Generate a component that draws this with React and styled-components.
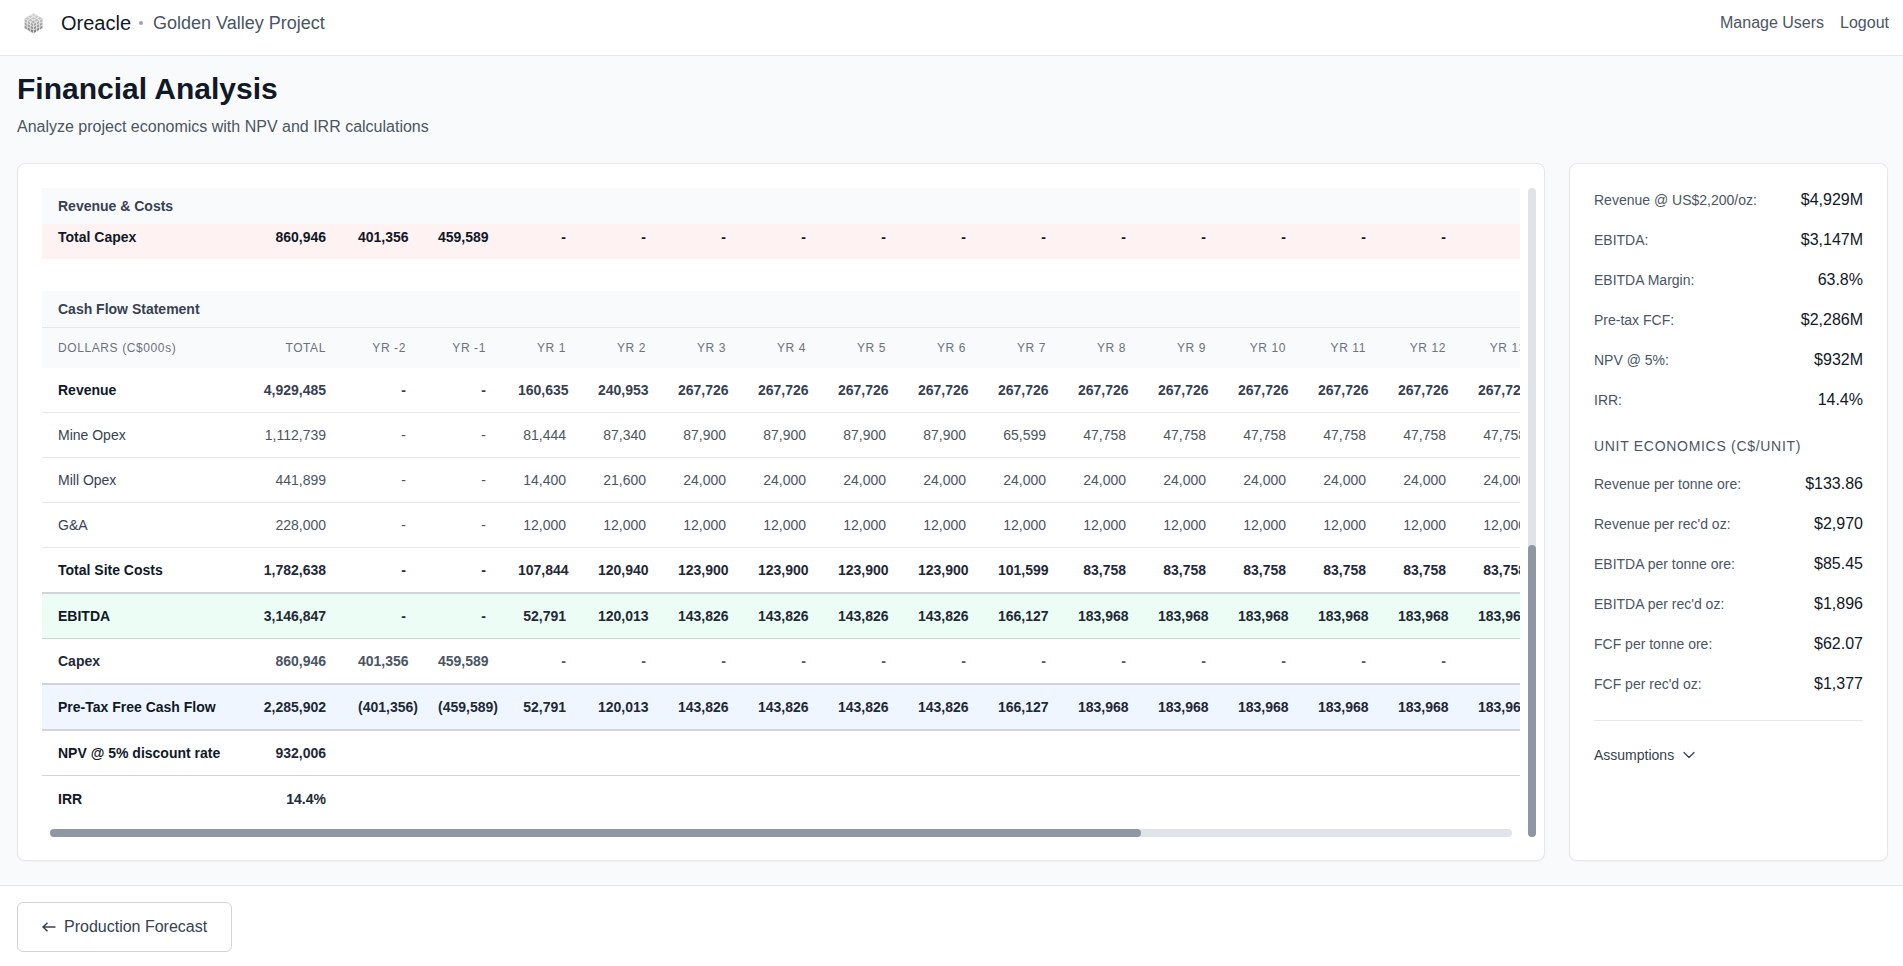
import React from 'react';
import styled, { createGlobalStyle } from 'styled-components';
import { ChevronDown } from 'lucide-react';

const Global = createGlobalStyle`
  * { box-sizing: border-box; }
  html, body { margin: 0; padding: 0; height: 100%; }
  body { font-family: "Liberation Sans", Arial, sans-serif; background: #f9fafb; color: #111827; overflow: hidden; }
`;

const Page = styled.div`
  height: 966px;
  display: flex;
  flex-direction: column;
`;

const Header = styled.header`
  height: 56px;
  flex: none;
  background: #fff;
  border-bottom: 1px solid #e5e7eb;
  display: flex;
  align-items: flex-start;
  justify-content: space-between;
  padding: 12px 14px 0 23px;
`;

const Brand = styled.div`
  display: flex;
  align-items: center;
  height: 22px;
`;

const Logo = styled.svg`
  width: 21px;
  height: 21px;
  margin-right: 17px;
  flex: none;
`;

const BrandName = styled.span`
  font-size: 20px;
  color: #111827;
`;

const BrandDot = styled.span`
  width: 4px;
  height: 4px;
  border-radius: 50%;
  background: #9ca3af;
  margin: 0 10px 0 8px;
`;

const ProjectName = styled.span`
  font-size: 18px;
  color: #4b5563;
`;

const Nav = styled.nav`
  display: flex;
  gap: 16px;
  height: 22px;
  align-items: center;
`;

const NavLink = styled.a`
  font-size: 16px;
  color: #4b5563;
`;

const Main = styled.main`
  flex: 1;
  min-height: 0;
  padding: 15px 15px 25px 17px;
  display: flex;
  flex-direction: column;
`;

const Title = styled.h1`
  margin: 0;
  font-size: 30px;
  line-height: 36px;
  font-weight: 700;
  color: #111827;
`;

const Subtitle = styled.p`
  margin: 8px 0 0;
  font-size: 16px;
  line-height: 24px;
  color: #4b5563;
`;

const Columns = styled.div`
  margin-top: 24px;
  flex: 1;
  min-height: 0;
  display: grid;
  grid-template-columns: 1fr 319px;
  gap: 24px;
`;

const Card = styled.section`
  background: #fff;
  border: 1px solid #e5e7eb;
  border-radius: 8px;
  box-shadow: 0 1px 2px rgba(0, 0, 0, 0.04);
  min-width: 0;
`;

const TableCard = styled(Card)`
  padding: 24px 8px 23px 24px;
  display: grid;
  grid-template-columns: minmax(0, 1fr) 8px;
  grid-template-rows: minmax(0, 1fr) 8px;
  column-gap: 8px;
  row-gap: 8px;
`;

const Viewport = styled.div`
  overflow: hidden;
  min-width: 0;
`;

const SectionTitle = styled.div`
  width: 1500px;
  height: ${p => (p.$ruled ? 37 : 36)}px;
  padding-left: 16px;
  display: flex;
  align-items: center;
  font-size: 14px;
  font-weight: 700;
  color: #374151;
  background: #f9fafb;
  border-bottom: ${p => (p.$ruled ? '1px solid #e5e7eb' : '0')};
`;

const Row = styled.div`
  width: 1500px;
  display: grid;
  grid-template-columns: 200px 100px repeat(15, 80px);
  align-items: center;
  font-size: 14px;
  height: ${p => p.$height}px;
  background: ${p => p.$bg || '#fff'};
  border-top: ${p => p.$top || '0'};
  border-bottom: ${p => p.$bottom || '0'};
`;

const ClippedRow = styled(Row)`
  margin-bottom: 32px;
  padding-bottom: 9px;
`;

const HeadRow = styled(Row)`
  font-size: 12px;
  letter-spacing: 0.05em;
  color: #6b7280;
  text-transform: uppercase;
  background: #f9fafb;
`;

const HeadLabel = styled.div`
  padding-left: 16px;
  white-space: nowrap;
`;

const LowerCase = styled.span`
  text-transform: none;
`;

const RowLabel = styled.div`
  padding-left: 16px;
  white-space: nowrap;
  font-weight: ${p => (p.$bold ? 700 : 400)};
  color: ${p => (p.$bold ? p.$color || '#111827' : '#374151')};
`;

const Cell = styled.div`
  padding: 0 16px;
  text-align: right;
  white-space: nowrap;
  font-weight: ${p => (p.$bold ? 700 : 400)};
  color: ${p => p.$color || (p.$bold ? '#1f2937' : '#4b5563')};
`;

const HeadCell = styled.div`
  padding: 0 16px;
  text-align: right;
  white-space: nowrap;
`;

const VTrack = styled.div`
  grid-row: 1 / span 2;
  grid-column: 2;
  background: #e0e3e7;
  border-radius: 4px;
  display: flex;
  flex-direction: column;
  justify-content: flex-end;
`;

const VThumb = styled.div`
  height: 292px;
  background: #8e97a3;
  border-radius: 4px;
`;

const HTrack = styled.div`
  grid-row: 2;
  grid-column: 1;
  margin: 0 8px;
  background: #e0e3e7;
  border-radius: 4px;
`;

const HThumb = styled.div`
  width: 1091px;
  height: 8px;
  background: #8e97a3;
  border-radius: 4px;
`;

const SidePanel = styled(Card)`
  padding: 16px 24px 0 24px;
`;

const Metric = styled.div`
  height: 40px;
  display: flex;
  align-items: center;
  justify-content: space-between;
`;

const MetricLabel = styled.span`
  font-size: 14px;
  color: #4b5563;
`;

const MetricValue = styled.span`
  font-size: 16px;
  color: #111827;
`;

const SideHeading = styled.div`
  margin: 16px 0 8px;
  font-size: 14px;
  line-height: 20px;
  letter-spacing: 0.05em;
  color: #4b5563;
  text-transform: uppercase;
`;

const Divider = styled.hr`
  margin: 16px 0 0;
  border: 0;
  border-top: 1px solid #e5e7eb;
`;

const Disclosure = styled.button`
  margin-top: 24px;
  padding: 0;
  background: none;
  border: 0;
  display: flex;
  align-items: center;
  gap: 5px;
  font: inherit;
  font-size: 14px;
  line-height: 20px;
  color: #374151;
`;

const Footer = styled.footer`
  height: 81px;
  flex: none;
  background: #fff;
  border-top: 1px solid #e5e7eb;
  padding: 16px 17px;
`;

const BackButton = styled.button`
  width: 215px;
  height: 50px;
  background: #fff;
  border: 1px solid #d1d5db;
  border-radius: 6px;
  padding: 0 24px;
  display: flex;
  align-items: center;
  gap: 8px;
  font: inherit;
  font-size: 16px;
  color: #374151;
  white-space: nowrap;
`;

const BackArrow = styled.svg`
  width: 14px;
  height: 10px;
  flex: none;
`;

const faces = [
  { o: [10.5, 0.5], u: [3, 1.7], v: [-3, 1.7] },
  { o: [1.5, 5.6], u: [3, 1.7], v: [0, 3.2] },
  { o: [10.5, 10.7], u: [3, -1.7], v: [0, 3.2] },
];

const tile = (o, u, v, i, j) => {
  const a = [o[0] + u[0] * i + v[0] * j, o[1] + u[1] * i + v[1] * j];
  const pts = [a, [a[0] + u[0], a[1] + u[1]], [a[0] + u[0] + v[0], a[1] + u[1] + v[1]], [a[0] + v[0], a[1] + v[1]]];
  const midY = pts.reduce((s, p) => s + p[1], 0) / 4;
  const level = Math.round(222 - (midY / 20.5) * 105);
  return { pts: pts.map(p => p.join(',')).join(' '), fill: `rgb(${level},${level},${level})` };
};

const LogoMark = () => (
  <Logo viewBox="1.2 0.2 18.6 20.6" aria-hidden="true">
    {faces.map(({ o, u, v }, f) =>
      [0, 1, 2].map(i =>
        [0, 1, 2].map(j => {
          const t = tile(o, u, v, i, j);
          return <polygon key={`${f}${i}${j}`} points={t.pts} fill={t.fill} stroke="#f3f3f3" strokeWidth="0.55" />;
        })
      )
    )}
  </Logo>
);

const rep = (v, n) => Array(n).fill(v);
const dashes = (n) => rep('-', n);

const years = ['Yr -2', 'Yr -1', ...Array.from({ length: 13 }, (_, i) => `Yr ${i + 1}`)];
const capexCells = ['860,946', '401,356', '459,589', ...dashes(12), ''];

const rows = [
  { label: 'Revenue', bold: true, height: 45, bottom: '1px solid #e5e7eb', color: '#374151',
    cells: ['4,929,485', '-', '-', '160,635', '240,953', ...rep('267,726', 11)] },
  { label: 'Mine Opex', height: 45, bottom: '1px solid #e5e7eb',
    cells: ['1,112,739', '-', '-', '81,444', '87,340', ...rep('87,900', 4), '65,599', ...rep('47,758', 6)] },
  { label: 'Mill Opex', height: 45, bottom: '1px solid #e5e7eb',
    cells: ['441,899', '-', '-', '14,400', '21,600', ...rep('24,000', 11)] },
  { label: 'G&A', height: 45, bottom: '1px solid #e5e7eb',
    cells: ['228,000', '-', '-', ...rep('12,000', 13)] },
  { label: 'Total Site Costs', bold: true, height: 46, bottom: '2px solid #d1d5db',
    cells: ['1,782,638', '-', '-', '107,844', '120,940', ...rep('123,900', 4), '101,599', ...rep('83,758', 6)] },
  { label: 'EBITDA', bold: true, height: 45, bg: '#ecfdf5', bottom: '1px solid #d1d5db',
    cells: ['3,146,847', '-', '-', '52,791', '120,013', ...rep('143,826', 4), '166,127', ...rep('183,968', 6)] },
  { label: 'Capex', bold: true, height: 44, labelColor: '#1f2937', color: '#4b5563', cells: capexCells },
  { label: 'Pre-Tax Free Cash Flow', bold: true, height: 48, bg: '#eff6ff', top: '2px solid #d1d5db', bottom: '2px solid #d1d5db',
    cells: ['2,285,902', '(401,356)', '(459,589)', '52,791', '120,013', ...rep('143,826', 4), '166,127', ...rep('183,968', 6)] },
  { label: 'NPV @ 5% discount rate', bold: true, height: 45, bottom: '1px solid #d1d5db', cells: ['932,006'] },
  { label: 'IRR', bold: true, height: 45, cells: ['14.4%'] },
];

const summary = [
  ['Revenue @ US$2,200/oz:', '$4,929M'],
  ['EBITDA:', '$3,147M'],
  ['EBITDA Margin:', '63.8%'],
  ['Pre-tax FCF:', '$2,286M'],
  ['NPV @ 5%:', '$932M'],
  ['IRR:', '14.4%'],
];

const unit = [
  ['Revenue per tonne ore:', '$133.86'],
  ["Revenue per rec'd oz:", '$2,970'],
  ['EBITDA per tonne ore:', '$85.45'],
  ["EBITDA per rec'd oz:", '$1,896'],
  ['FCF per tonne ore:', '$62.07'],
  ["FCF per rec'd oz:", '$1,377'],
];

const Metrics = ({ items }) =>
  items.map(([l, v]) => (
    <Metric key={l}>
      <MetricLabel>{l}</MetricLabel>
      <MetricValue>{v}</MetricValue>
    </Metric>
  ));

export default function App() {
  return (
    <Page>
      <Global />
      <Header>
        <Brand>
          <LogoMark />
          <BrandName>Oreacle</BrandName>
          <BrandDot />
          <ProjectName>Golden Valley Project</ProjectName>
        </Brand>
        <Nav>
          <NavLink>Manage Users</NavLink>
          <NavLink>Logout</NavLink>
        </Nav>
      </Header>
      <Main>
        <Title>Financial Analysis</Title>
        <Subtitle>Analyze project economics with NPV and IRR calculations</Subtitle>
        <Columns>
          <TableCard>
            <Viewport>
              <SectionTitle>Revenue &amp; Costs</SectionTitle>
              <ClippedRow $height={35} $bg="#fef2f2">
                <RowLabel $bold>Total Capex</RowLabel>
                {capexCells.map((c, i) => (
                  <Cell key={i} $bold $color="#111827">{c}</Cell>
                ))}
              </ClippedRow>
              <SectionTitle $ruled>Cash Flow Statement</SectionTitle>
              <HeadRow $height={40}>
                <HeadLabel>Dollars (C$000<LowerCase>s</LowerCase>)</HeadLabel>
                <HeadCell>Total</HeadCell>
                {years.map(y => (
                  <HeadCell key={y}>{y}</HeadCell>
                ))}
              </HeadRow>
              {rows.map(r => (
                <Row key={r.label} $height={r.height} $bg={r.bg} $top={r.top} $bottom={r.bottom}>
                  <RowLabel $bold={r.bold} $color={r.labelColor}>{r.label}</RowLabel>
                  {r.cells.map((c, i) => (
                    <Cell key={i} $bold={r.bold} $color={r.color}>{c}</Cell>
                  ))}
                </Row>
              ))}
            </Viewport>
            <VTrack><VThumb /></VTrack>
            <HTrack><HThumb /></HTrack>
          </TableCard>
          <SidePanel>
            <Metrics items={summary} />
            <SideHeading>Unit Economics (C$/unit)</SideHeading>
            <Metrics items={unit} />
            <Divider />
            <Disclosure>
              Assumptions
              <ChevronDown size={20} strokeWidth={1.5} />
            </Disclosure>
          </SidePanel>
        </Columns>
      </Main>
      <Footer>
        <BackButton>
          <BackArrow viewBox="0 0 14 10" aria-hidden="true">
            <path d="M13.5 5H1M5.5 0.7 1 5l4.5 4.3" fill="none" stroke="currentColor" strokeWidth="1.5" />
          </BackArrow>
          <span>Production Forecast</span>
        </BackButton>
      </Footer>
    </Page>
  );
}
